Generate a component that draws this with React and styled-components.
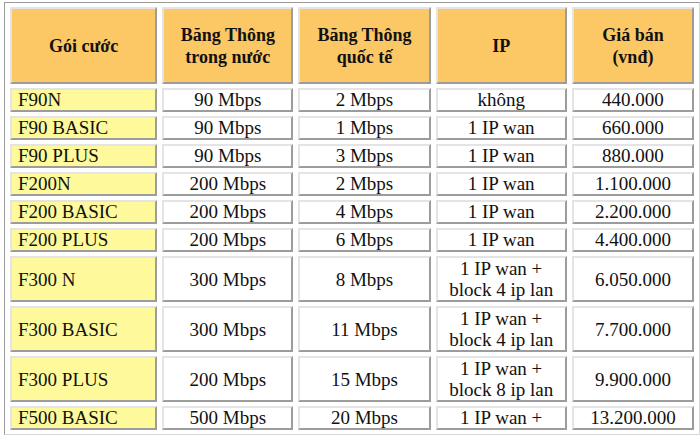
import styled, { createGlobalStyle } from 'styled-components';

const GlobalStyle = createGlobalStyle`
  html, body { margin: 0; padding: 0; background: #fff; }
  body { width: 700px; height: 437px; overflow: hidden; }
`;

const COLS = [147, 131, 132, 131, 122];

const PLANS = [
  { name: 'F90N', domestic: '90 Mbps', intl: '2 Mbps', ip: ['không'], price: '440.000' },
  { name: 'F90 BASIC', domestic: '90 Mbps', intl: '1 Mbps', ip: ['1 IP wan'], price: '660.000' },
  { name: 'F90 PLUS', domestic: '90 Mbps', intl: '3 Mbps', ip: ['1 IP wan'], price: '880.000' },
  { name: 'F200N', domestic: '200 Mbps', intl: '2 Mbps', ip: ['1 IP wan'], price: '1.100.000' },
  { name: 'F200 BASIC', domestic: '200 Mbps', intl: '4 Mbps', ip: ['1 IP wan'], price: '2.200.000' },
  { name: 'F200 PLUS', domestic: '200 Mbps', intl: '6 Mbps', ip: ['1 IP wan'], price: '4.400.000' },
  { name: 'F300 N', domestic: '300 Mbps', intl: '8 Mbps', ip: ['1 IP wan +', 'block 4 ip lan'], price: '6.050.000' },
  { name: 'F300 BASIC', domestic: '300 Mbps', intl: '11 Mbps', ip: ['1 IP wan +', 'block 4 ip lan'], price: '7.700.000' },
  { name: 'F300 PLUS', domestic: '200 Mbps', intl: '15 Mbps', ip: ['1 IP wan +', 'block 8 ip lan'], price: '9.900.000' },
  { name: 'F500 BASIC', domestic: '500 Mbps', intl: '20 Mbps', ip: ['1 IP wan +'], price: '13.200.000' },
];

export default function App() {
  return (
    <>
      <GlobalStyle />
      <Table>
        <colgroup>
          {COLS.map((w, i) => <col key={i} style={{ width: w }} />)}
        </colgroup>
        <thead>
          <tr>
            <Th>Gói cước</Th>
            <Th>Băng Thông<br />trong nước</Th>
            <Th>Băng Thông<br />quốc tế</Th>
            <Th>IP</Th>
            <Th>Giá bán<br />(vnđ)</Th>
          </tr>
        </thead>
        <tbody>
          {PLANS.map((p) => {
            const tall = p.ip.length > 1;
            return (
              <tr key={p.name}>
                <NameCell $tall={tall}>{p.name}</NameCell>
                <Td $tall={tall}>{p.domestic}</Td>
                <Td $tall={tall}>{p.intl}</Td>
                <Td $tall={tall}>
                  {p.ip.map((line, i) => <Line key={i}>{line}</Line>)}
                </Td>
                <Td $tall={tall}>{p.price}</Td>
              </tr>
            );
          })}
        </tbody>
      </Table>
    </>
  );
}

/* ========== Styled ========== */

const Table = styled.table`
  margin: 2px 0 0 4px;
  width: 696px;
  table-layout: fixed;
  border-collapse: separate;
  border-spacing: 5px 4px;
  border: 1px solid;
  border-color: #9a9a9a #d8d8d8 #d8d8d8 #9a9a9a;
  font-family: "Liberation Serif", "Times New Roman", serif;
  color: #111;
`;

const Cell = styled.td`
  box-sizing: border-box;
  padding: 0 4px;
  border: 2px solid;
  border-color: #e4e4e4 #9c9c9c #9c9c9c #e4e4e4;
  text-align: center;
  vertical-align: middle;
  overflow: hidden;
`;

const Th = styled(Cell).attrs({ as: 'th' })`
  height: 77px;
  background: #fcc765;
  font-size: 18px;
  font-weight: 700;
  line-height: 22px;
`;

const Td = styled(Cell)`
  height: ${({ $tall }) => ($tall ? '46px' : '24px')};
  background: #fff;
  font-size: 19px;
  line-height: ${({ $tall }) => ($tall ? '21px' : '20px')};
`;

const NameCell = styled(Td)`
  background: #fefa9b;
  text-align: left;
  padding-left: 6px;
`;

const Line = styled.div`
  white-space: nowrap;
`;
